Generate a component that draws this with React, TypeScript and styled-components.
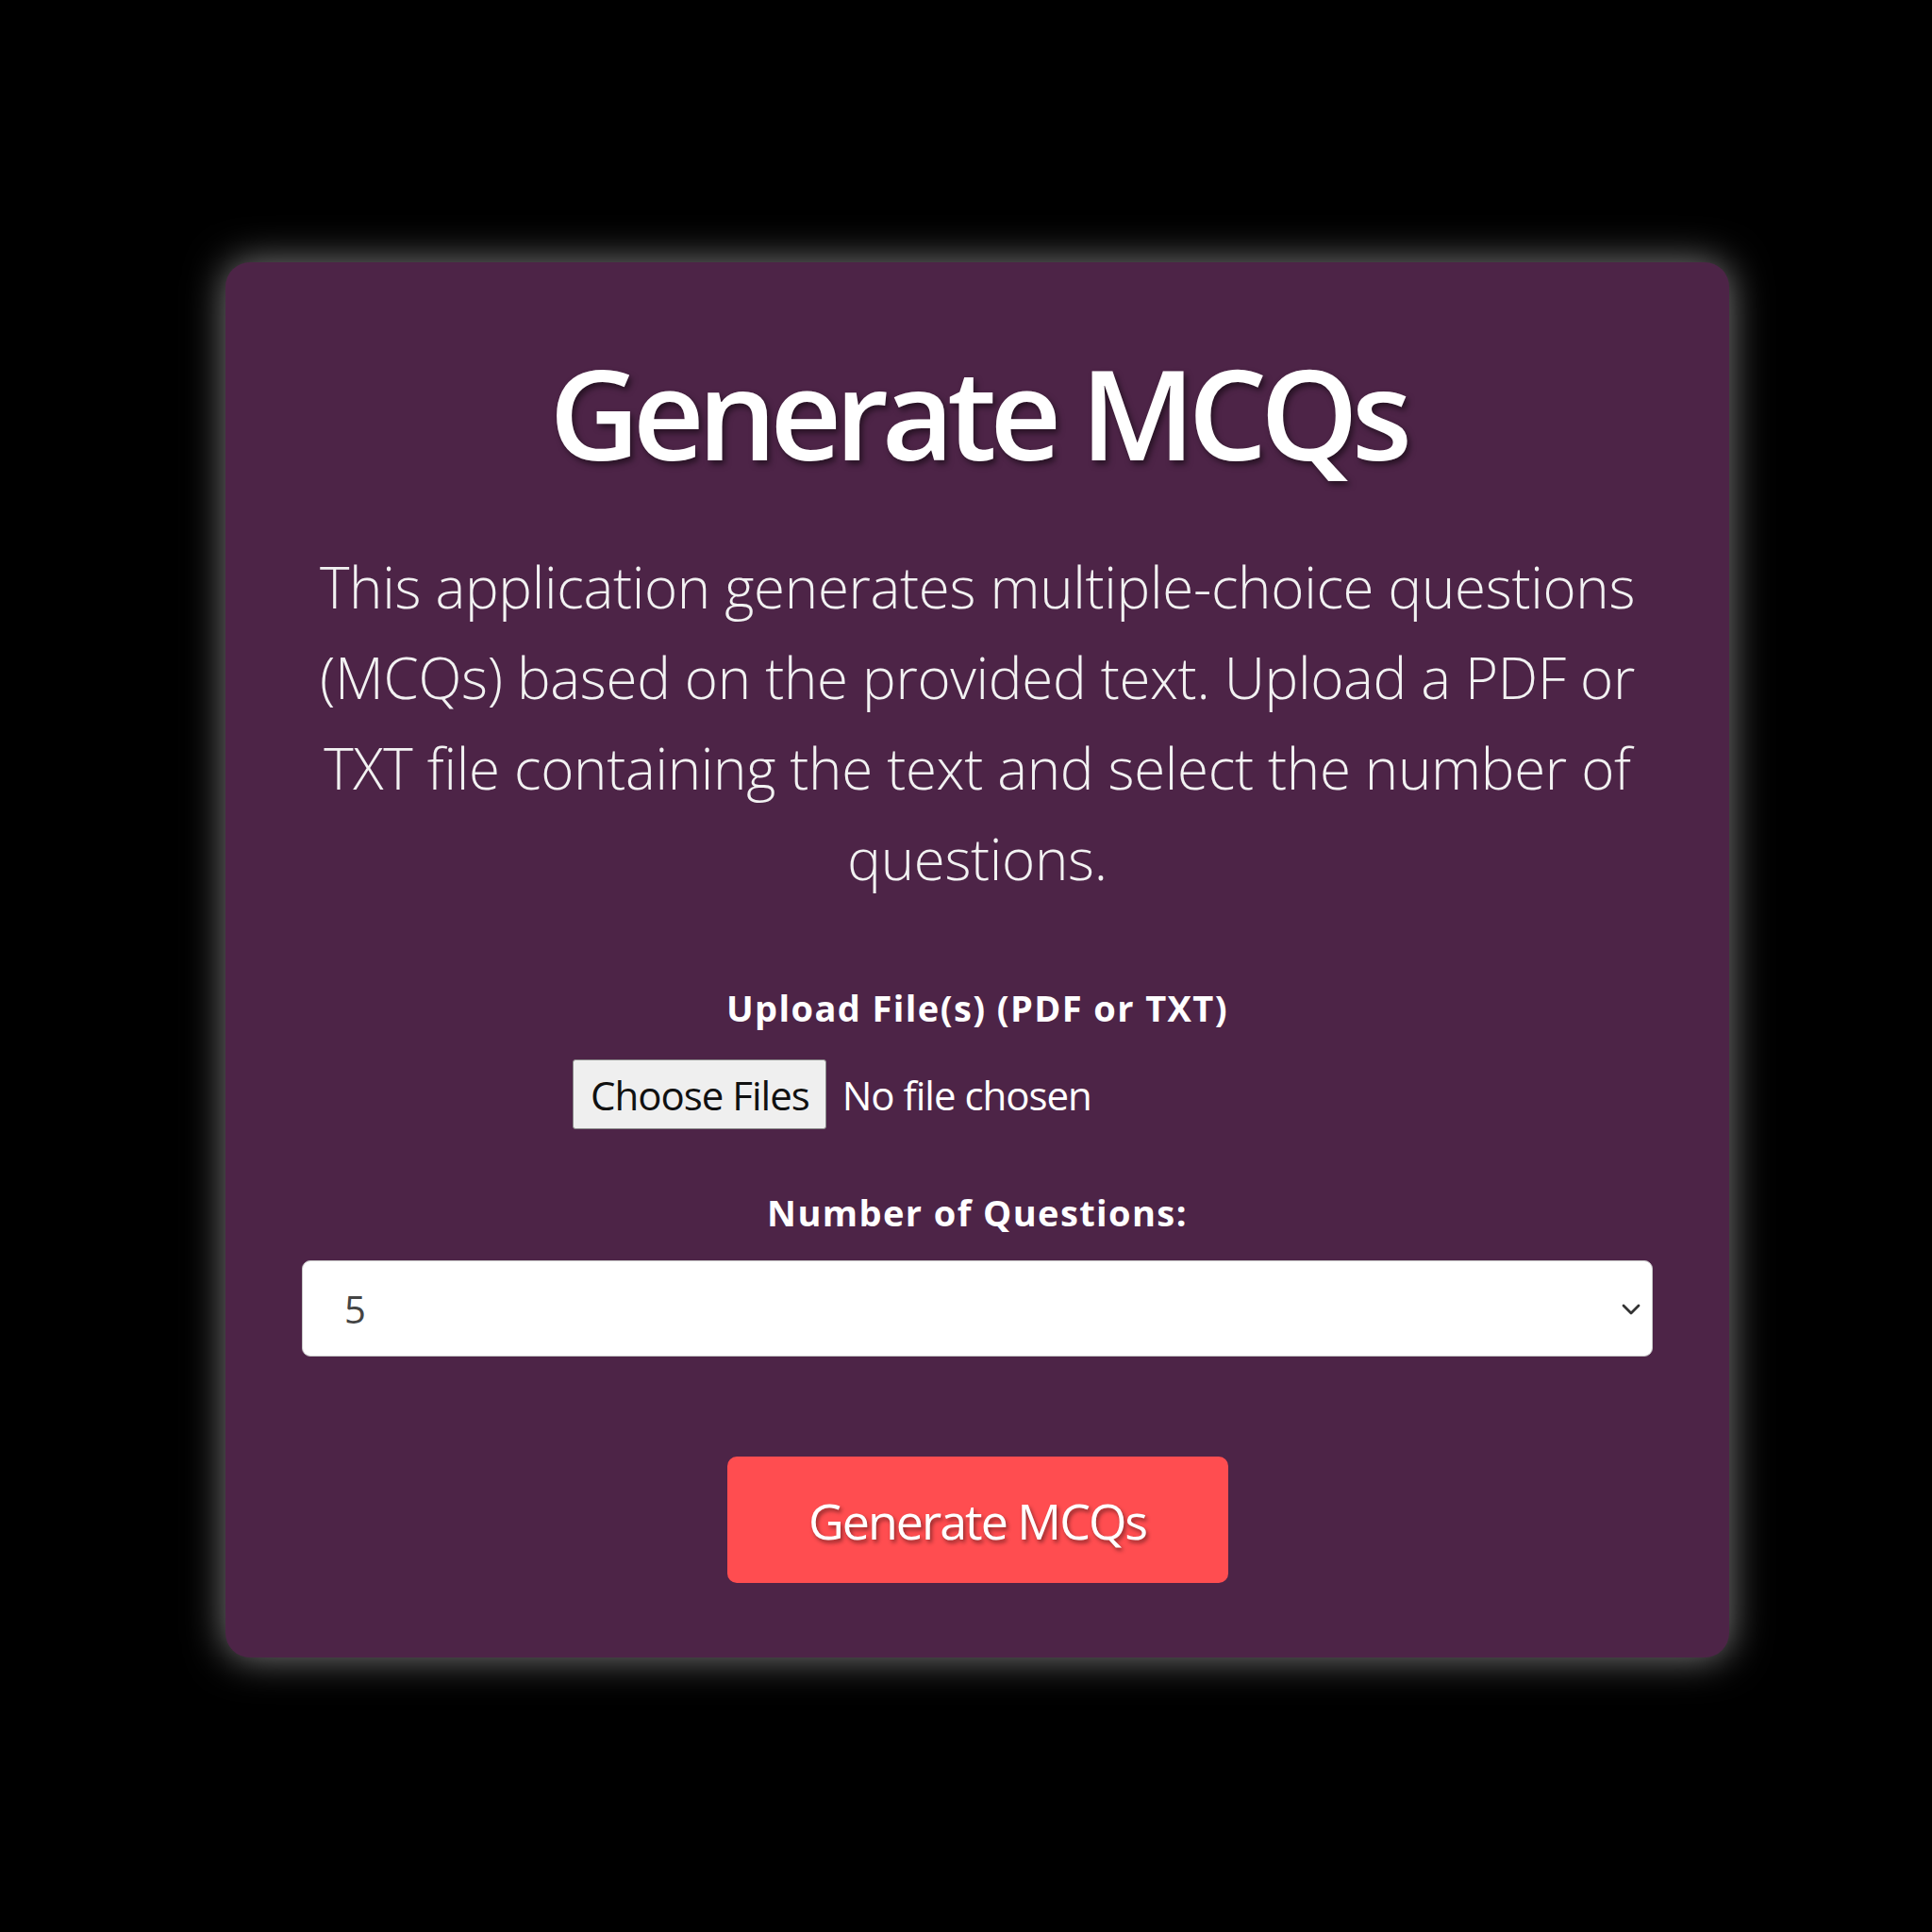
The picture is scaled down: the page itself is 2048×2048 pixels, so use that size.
import React from "react";
import styled, { createGlobalStyle } from "styled-components";

const GlobalStyle = createGlobalStyle`
  html, body {
    margin: 0;
    padding: 0;
    background: #000;
  }
  body {
    font-family: "Open Sans", "Noto Sans", Arial, sans-serif;
    color: #fff;
  }
`;

const Page = styled.main`
  min-height: 2048px;
  box-sizing: border-box;
  padding: 278px 215px 0 239px;
  background: #000;
`;

const Card = styled.section`
  box-sizing: border-box;
  width: 1594px;
  padding: 80px 81px 79px;
  background: #4d2447;
  border-radius: 26px;
  box-shadow: 0 0 42px rgba(255, 255, 255, 0.5);
  display: flex;
  flex-direction: column;
  align-items: center;
  text-align: center;
`;

const Title = styled.h1`
  margin: 0;
  font-size: 132px;
  line-height: 158px;
  font-weight: 600;
  letter-spacing: -7.2px;
  color: #fff;
  text-shadow: 3px 4px 6px rgba(0, 0, 0, 0.5);
`;

const Description = styled.p`
  margin: 58px 0 0;
  font-size: 60px;
  line-height: 96px;
  font-weight: 300;
  letter-spacing: -0.3px;
  color: #f2f2f2;
`;

const FieldLabel = styled.label<{ $gap: number }>`
  display: block;
  margin-top: ${(p) => p.$gap}px;
  font-size: 38px;
  line-height: 46px;
  font-weight: 700;
  letter-spacing: 1.4px;
  color: #fff;
`;

const FileRow = styled.div`
  margin-top: 32px;
  width: 858px;
  display: flex;
  align-items: center;
  gap: 17px;
`;

const HiddenInput = styled.input`
  display: none;
`;

const ChooseButton = styled.span`
  box-sizing: border-box;
  height: 74px;
  padding: 0 17px 0 18px;
  display: inline-flex;
  align-items: center;
  background: #efefef;
  border: 1px solid #8a8a8a;
  border-radius: 3px;
  color: #111;
  font-size: 42px;
  letter-spacing: -1px;
  cursor: pointer;
`;

const FileStatus = styled.span`
  font-size: 42px;
  letter-spacing: -1px;
  color: #fff;
`;

const SelectWrap = styled.div`
  position: relative;
  margin-top: 28px;
  width: 100%;
`;

const Select = styled.select`
  box-sizing: border-box;
  width: 100%;
  height: 102px;
  padding: 0 60px 0 44px;
  appearance: none;
  -webkit-appearance: none;
  background: #fff;
  border: 1px solid #c8c8c8;
  border-radius: 9px;
  color: #444;
  font-family: "Open Sans", "Noto Sans", Arial, sans-serif;
  font-size: 40px;
  outline: none;
`;

const Chevron = styled.svg`
  position: absolute;
  right: 12px;
  top: 44px;
  width: 22px;
  height: 16px;
  pointer-events: none;
`;

const SubmitButton = styled.button`
  margin-top: 106px;
  width: 531px;
  height: 134px;
  background: #ff4d50;
  border: none;
  border-radius: 10px;
  color: #fff;
  font-family: "Open Sans", "Noto Sans", Arial, sans-serif;
  font-size: 52px;
  font-weight: 400;
  letter-spacing: -2px;
  text-shadow: 2px 3px 4px rgba(0, 0, 0, 0.45);
  cursor: pointer;
`;

export default function App() {
  return (
    <>
      <GlobalStyle />
      <Page>
        <Card>
          <Title>Generate MCQs</Title>
          <Description>
            This application generates multiple-choice questions (MCQs) based on the provided
            text. Upload a PDF or TXT file containing the text and select the number of
            questions.
          </Description>
          <FieldLabel $gap={87} htmlFor="files">
            Upload File(s) (PDF or TXT)
          </FieldLabel>
          <FileRow>
            <HiddenInput id="files" type="file" multiple accept=".pdf,.txt" />
            <ChooseButton as="label" htmlFor="files">
              Choose Files
            </ChooseButton>
            <FileStatus>No file chosen</FileStatus>
          </FileRow>
          <FieldLabel $gap={65} htmlFor="count">
            Number of Questions:
          </FieldLabel>
          <SelectWrap>
            <Select id="count" defaultValue="5">
              <option value="5">5</option>
              <option value="10">10</option>
              <option value="15">15</option>
              <option value="20">20</option>
            </Select>
            <Chevron viewBox="0 0 22 16" fill="none">
              <path d="M3 4l8 8 8-8" stroke="#333" strokeWidth="2.8" strokeLinecap="round" strokeLinejoin="round" />
            </Chevron>
          </SelectWrap>
          <SubmitButton type="button">Generate MCQs</SubmitButton>
        </Card>
      </Page>
    </>
  );
}
